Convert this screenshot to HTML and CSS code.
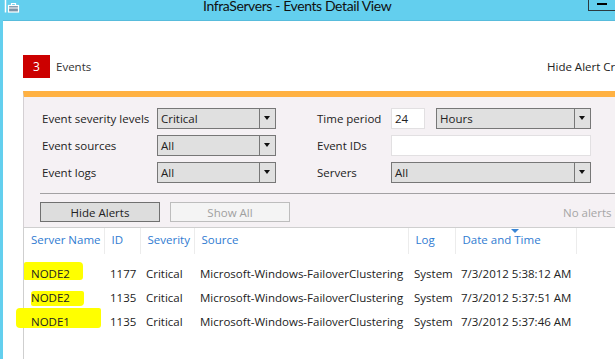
FILE: index.html
```html
<!DOCTYPE html>
<html lang="en">
<head>
    <meta charset="UTF-8">
    <title>InfraServers - Events Detail View</title>
    <link rel="stylesheet" href="styles.css">
</head>
<body>
    <div class="titlebar">
        <svg class="app-icon" width="16" height="13" viewBox="0 0 16 13">
            <path d="M1.5 0 V12.5" stroke="#fff" stroke-width="1.5" fill="none"/>
            <rect x="4.5" y="5.5" width="10" height="6.5" fill="#7d93a6" stroke="#fff" stroke-width="1.2"/>
            <path d="M7.5 5.5 V3.5 H11.5 V5.5" stroke="#fff" stroke-width="1.2" fill="none"/>
            <path d="M4.5 8 H14.5" stroke="#fff" stroke-width="1"/>
        </svg>
        <div class="title">InfraServers - Events Detail View</div>
        <div class="min-btn"><span></span></div>
    </div>

    <div class="client">
        <div class="summary">
            <div class="badge">3</div>
            <div class="summary-label">Events</div>
            <div class="summary-link">Hide Alert Criteria</div>
        </div>

        <div class="panel">
            <div class="filters">
                <label>Event severity levels</label>
                <div class="select"><span>Critical</span><i></i></div>
                <label class="right-label">Time period</label>
                <div class="period">
                    <div class="textbox small">24</div>
                    <div class="select"><span>Hours</span><i></i></div>
                </div>

                <label>Event sources</label>
                <div class="select"><span>All</span><i></i></div>
                <label class="right-label">Event IDs</label>
                <div class="textbox"></div>

                <label>Event logs</label>
                <div class="select"><span>All</span><i></i></div>
                <label class="right-label">Servers</label>
                <div class="select"><span>All</span><i></i></div>
            </div>

            <div class="actions">
                <button class="btn">Hide Alerts</button>
                <button class="btn disabled">Show All</button>
                <div class="no-alerts">No alerts hidden</div>
            </div>
        </div>

        <div class="grid-wrap">
            <table class="events">
                <colgroup>
                    <col style="width:80px">
                    <col style="width:36px">
                    <col style="width:54px">
                    <col style="width:214px">
                    <col style="width:47px">
                    <col style="width:121px">
                    <col>
                </colgroup>
                <thead>
                    <tr>
                        <th>Server Name</th>
                        <th>ID</th>
                        <th>Severity</th>
                        <th>Source</th>
                        <th>Log</th>
                        <th class="sorted">Date and Time</th>
                        <th></th>
                    </tr>
                </thead>
                <tbody>
                    <tr class="spacer"><td colspan="7"></td></tr>
                    <tr>
                        <td class="node"><span class="mark m1"></span><span class="txt">NODE2</span></td>
                        <td>1177</td>
                        <td>Critical</td>
                        <td>Microsoft-Windows-FailoverClustering</td>
                        <td>System</td>
                        <td>7/3/2012 5:38:12 AM</td>
                        <td></td>
                    </tr>
                    <tr>
                        <td class="node"><span class="mark m2"></span><span class="txt">NODE2</span></td>
                        <td>1135</td>
                        <td>Critical</td>
                        <td>Microsoft-Windows-FailoverClustering</td>
                        <td>System</td>
                        <td>7/3/2012 5:37:51 AM</td>
                        <td></td>
                    </tr>
                    <tr>
                        <td class="node"><span class="mark m3"></span><span class="txt">NODE1</span></td>
                        <td>1135</td>
                        <td>Critical</td>
                        <td>Microsoft-Windows-FailoverClustering</td>
                        <td>System</td>
                        <td>7/3/2012 5:37:46 AM</td>
                        <td></td>
                    </tr>
                </tbody>
            </table>
        </div>
    </div>
</body>
</html>
```

FILE: styles.css
```css
* {
    margin: 0;
    padding: 0;
    box-sizing: border-box;
}

body {
    width: 615px;
    height: 359px;
    overflow: hidden;
    background: #63cfee;
    font-family: 'Open Sans', 'Noto Sans', sans-serif;
    font-size: 11.5px;
    color: #222;
}

/* Window chrome */
.titlebar {
    position: relative;
    height: 20px;
}

.app-icon {
    position: absolute;
    left: 4px;
    top: 0;
}

.title {
    position: absolute;
    left: 203px;
    top: -3px;
    font-family: Lato, 'Open Sans', sans-serif;
    font-size: 14px;
    letter-spacing: -0.4px;
    color: #111;
    white-space: nowrap;
}

.min-btn {
    position: absolute;
    left: 588px;
    top: -1px;
    width: 40px;
    height: 12px;
    border: 1px solid #2b3a40;
}

.min-btn span {
    position: absolute;
    left: 8px;
    top: 3px;
    width: 10px;
    height: 2px;
    background: #000;
}

.client {
    margin-left: 3px;
    height: 339px;
    background: #fff;
    border-top: 1px solid #58bcdc;
}

/* Event count summary */
.summary {
    display: grid;
    grid-template-columns: 27px 497px 200px;
    align-items: center;
    padding: 33px 0 0 20px;
    height: 57px;
    white-space: nowrap;
}

.badge {
    height: 23px;
    background: #cc0000;
    color: #fff;
    display: flex;
    align-items: center;
    justify-content: center;
    font-size: 12px;
}

.summary-label {
    margin-left: 6px;
    color: #333;
}

.summary-link {
    color: #222;
}

/* Filter panel */
.panel {
    margin: 13px 0 0 20px;
    background: #f5f1f4;
    border-top: 6px solid #ffb142;
    border-left: 1px solid #d4d0d3;
    border-bottom: 1px solid #cfcfcf;
    height: 137px;
}

.filters {
    display: grid;
    grid-template-columns: 115px 119px 115px 200px;
    grid-template-rows: repeat(3, 21px);
    row-gap: 6px;
    align-items: center;
    padding: 11px 0 0 18px;
}

.filters label {
    white-space: nowrap;
    line-height: 21px;
}

.right-label {
    padding-left: 41px;
}

.select {
    display: flex;
    height: 21px;
    background: #e0e0e0;
    border: 1px solid #777;
}

.select span {
    flex: 1;
    padding-left: 3px;
    line-height: 19px;
}

.select i {
    width: 16px;
    border-left: 1px solid #777;
    position: relative;
}

.select i::after {
    content: "";
    position: absolute;
    left: 4px;
    top: 7px;
    border-left: 3.5px solid transparent;
    border-right: 3.5px solid transparent;
    border-top: 4px solid #111;
}

.period {
    display: flex;
    gap: 11px;
}

.period .select {
    flex: 1;
}

.textbox {
    height: 21px;
    background: #fff;
    border: 1px solid #e2e0e2;
    padding-left: 3px;
    line-height: 19px;
}

.textbox.small {
    width: 34px;
    flex-shrink: 0;
}

.actions {
    display: flex;
    align-items: center;
    gap: 10px;
    margin: 10px 0 0 16px;
    padding-top: 8px;
    border-top: 1px solid #a3a1a3;
    white-space: nowrap;
}

.btn {
    flex-shrink: 0;
    width: 120px;
    height: 20px;
    font-family: inherit;
    font-size: 11.5px;
    background: #dddddd;
    border: 1px solid #707070;
    color: #222;
}

.btn.disabled {
    background: #f4f4f4;
    border-color: #bdbdbd;
    color: #a0a0a0;
}

.no-alerts {
    flex-shrink: 0;
    margin-left: 263px;
    color: #a6a6a6;
}

/* Events grid */
.grid-wrap {
    margin-left: 20px;
    border-left: 1px solid #cfcfcf;
    height: 132px;
}

.events {
    width: 592px;
    table-layout: fixed;
    border-collapse: collapse;
    white-space: nowrap;
}

.events th {
    position: relative;
    height: 26px;
    padding: 0 0 3px 7px;
    text-align: left;
    font-weight: normal;
    color: #2f7bd1;
    border-right: 1px solid #ececec;
    overflow: hidden;
}

.events th:last-child {
    border-right: none;
}

.events th.sorted::before {
    content: "";
    position: absolute;
    left: 55px;
    top: 1px;
    border-left: 4px solid transparent;
    border-right: 4px solid transparent;
    border-top: 4px solid #3a86d6;
}

.events .spacer td {
    height: 7px;
    padding: 0;
}

.events td {
    height: 24px;
    padding-left: 6px;
    overflow: visible;
}

.events td.node {
    position: relative;
    padding-left: 7px;
}

.txt {
    position: relative;
}

.mark {
    position: absolute;
    background: #ffff00;
}

.m1 {
    left: 0;
    top: 1px;
    width: 59px;
    height: 18px;
    border-radius: 2px 4px 3px 1px;
}

.m2 {
    left: 7px;
    top: 6px;
    width: 53px;
    height: 15px;
    border-radius: 3px 2px 4px 2px;
}

.m3 {
    left: -8px;
    top: -1px;
    width: 85px;
    height: 20px;
    border-radius: 4px 2px 3px 4px;
}
```
